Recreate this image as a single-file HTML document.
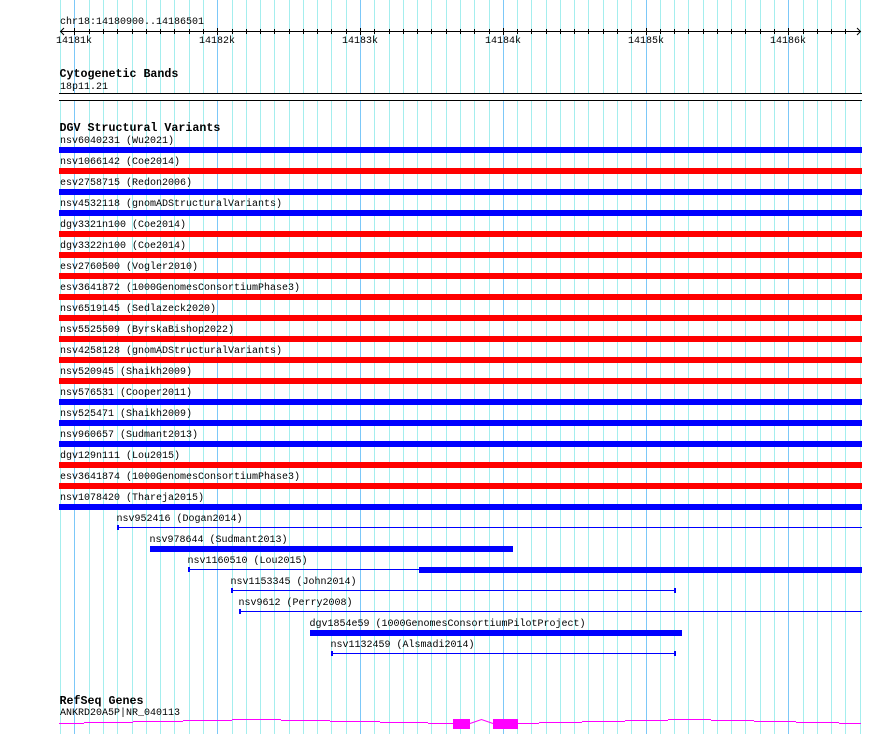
<!DOCTYPE html>
<html><head><meta charset="utf-8"><title>Genome tracks</title>
<style>
html,body{margin:0;padding:0;background:#fff;width:890px;height:734px;overflow:hidden}
svg{display:block}
text{font-family:"Liberation Mono",monospace;font-size:10px;fill:#000;white-space:pre}
text.b{font-weight:bold;font-size:11.67px}
</style></head><body>
<svg width="890" height="734" viewBox="0 0 890 734" xmlns="http://www.w3.org/2000/svg">
<g shape-rendering="crispEdges">
<path stroke="#a4eeee" stroke-width="1" fill="none" d="M60.5 0V734M89.5 0V734M103.5 0V734M117.5 0V734M132.5 0V734M146.5 0V734M160.5 0V734M174.5 0V734M189.5 0V734M203.5 0V734M232.5 0V734M246.5 0V734M260.5 0V734M274.5 0V734M289.5 0V734M303.5 0V734M317.5 0V734M331.5 0V734M346.5 0V734M374.5 0V734M389.5 0V734M403.5 0V734M417.5 0V734M431.5 0V734M446.5 0V734M460.5 0V734M474.5 0V734M489.5 0V734M517.5 0V734M531.5 0V734M546.5 0V734M560.5 0V734M574.5 0V734M588.5 0V734M603.5 0V734M617.5 0V734M631.5 0V734M660.5 0V734M674.5 0V734M688.5 0V734M703.5 0V734M717.5 0V734M731.5 0V734M745.5 0V734M760.5 0V734M774.5 0V734M803.5 0V734M817.5 0V734M831.5 0V734M845.5 0V734M860.5 0V734"/>
<path stroke="#7cc8f8" stroke-width="1" fill="none" d="M74.5 0V734M217.5 0V734M360.5 0V734M503.5 0V734M646.5 0V734M788.5 0V734"/>
<rect x="59" y="94" width="803" height="6" fill="#fff"/>
<rect x="59" y="93" width="803" height="1" fill="#000"/>
<rect x="59" y="100" width="803" height="1" fill="#000"/>
<!-- axis -->
<rect x="60" y="31" width="801" height="1" fill="#000"/>
<path stroke="#000" stroke-width="1" fill="none" d="M89.5 29V34M103.5 29V34M117.5 29V34M132.5 29V34M146.5 29V34M160.5 29V34M174.5 29V34M189.5 29V34M203.5 29V34M232.5 29V34M246.5 29V34M260.5 29V34M274.5 29V34M289.5 29V34M303.5 29V34M317.5 29V34M331.5 29V34M346.5 29V34M374.5 29V34M389.5 29V34M403.5 29V34M417.5 29V34M431.5 29V34M446.5 29V34M460.5 29V34M474.5 29V34M489.5 29V34M517.5 29V34M531.5 29V34M546.5 29V34M560.5 29V34M574.5 29V34M588.5 29V34M603.5 29V34M617.5 29V34M631.5 29V34M660.5 29V34M674.5 29V34M688.5 29V34M703.5 29V34M717.5 29V34M731.5 29V34M745.5 29V34M760.5 29V34M774.5 29V34M803.5 29V34M817.5 29V34M831.5 29V34M845.5 29V34M74.5 28V35M217.5 28V35M360.5 28V35M503.5 28V35M646.5 28V35M788.5 28V35"/>
</g>
<path stroke="#000" stroke-width="1" fill="none" d="M64 28L60.5 31.5L64 35M857 28L860.5 31.5L857 35"/>
<text x="60" y="24">chr18:14180900..14186501</text>
<text x="56" y="43">14181k</text>
<text x="199" y="43">14182k</text>
<text x="342" y="43">14183k</text>
<text x="485" y="43">14184k</text>
<text x="628" y="43">14185k</text>
<text x="770" y="43">14186k</text>
<text class="b" x="59.5" y="77">Cytogenetic Bands</text>
<text x="60" y="89">18p11.21</text>
<text class="b" x="59.5" y="131">DGV Structural Variants</text>
<g shape-rendering="crispEdges">
<rect x="59" y="147" width="803" height="6" fill="#0000ff"/>
<rect x="59" y="168" width="803" height="6" fill="#ff0000"/>
<rect x="59" y="189" width="803" height="6" fill="#0000ff"/>
<rect x="59" y="210" width="803" height="6" fill="#0000ff"/>
<rect x="59" y="231" width="803" height="6" fill="#ff0000"/>
<rect x="59" y="252" width="803" height="6" fill="#ff0000"/>
<rect x="59" y="273" width="803" height="6" fill="#ff0000"/>
<rect x="59" y="294" width="803" height="6" fill="#ff0000"/>
<rect x="59" y="315" width="803" height="6" fill="#ff0000"/>
<rect x="59" y="336" width="803" height="6" fill="#ff0000"/>
<rect x="59" y="357" width="803" height="6" fill="#ff0000"/>
<rect x="59" y="378" width="803" height="6" fill="#ff0000"/>
<rect x="59" y="399" width="803" height="6" fill="#0000ff"/>
<rect x="59" y="420" width="803" height="6" fill="#0000ff"/>
<rect x="59" y="441" width="803" height="6" fill="#0000ff"/>
<rect x="59" y="462" width="803" height="6" fill="#ff0000"/>
<rect x="59" y="483" width="803" height="6" fill="#ff0000"/>
<rect x="59" y="504" width="803" height="6" fill="#0000ff"/>
<!-- partial -->
<g fill="#0000ff">
<rect x="117" y="527" width="745" height="1"/><rect x="117" y="525" width="2" height="5"/>
<rect x="150" y="546" width="363" height="6"/>
<rect x="188" y="569" width="231" height="1"/><rect x="188" y="567" width="2" height="5"/><rect x="419" y="567" width="443" height="6"/>
<rect x="231" y="590" width="445" height="1"/><rect x="231" y="588" width="2" height="5"/><rect x="674" y="588" width="2" height="5"/>
<rect x="239" y="611" width="623" height="1"/><rect x="239" y="609" width="2" height="5"/>
<rect x="310" y="630" width="372" height="6"/>
<rect x="331" y="653" width="345" height="1"/><rect x="331" y="651" width="2" height="5"/><rect x="674" y="651" width="2" height="5"/>
</g>
<!-- gene -->
<g fill="#ff00ff">
<rect x="59" y="723" width="25" height="1"/>
<rect x="84" y="722" width="49" height="1"/>
<rect x="133" y="721" width="50" height="1"/>
<rect x="183" y="720" width="49" height="1"/>
<rect x="232" y="719" width="49" height="1"/>
<rect x="281" y="720" width="49" height="1"/>
<rect x="330" y="721" width="50" height="1"/>
<rect x="380" y="722" width="48" height="1"/>
<rect x="428" y="723" width="25" height="1"/>
<rect x="453" y="719" width="17" height="10"/>
<rect x="493" y="719" width="25" height="10"/>
<rect x="518" y="723" width="21" height="1"/>
<rect x="539" y="722" width="43" height="1"/>
<rect x="582" y="721" width="43" height="1"/>
<rect x="625" y="720" width="43" height="1"/>
<rect x="668" y="719" width="43" height="1"/>
<rect x="711" y="720" width="43" height="1"/>
<rect x="754" y="721" width="42" height="1"/>
<rect x="796" y="722" width="43" height="1"/>
<rect x="839" y="723" width="22" height="1"/>
</g>
</g>
<path d="M470 723.5L481.5 719.5L493 723.5" stroke="#ff00ff" stroke-width="1" fill="none"/>
<text x="60" y="143">nsv6040231 (Wu2021)</text>
<text x="60" y="164">nsv1066142 (Coe2014)</text>
<text x="60" y="185">esv2758715 (Redon2006)</text>
<text x="60" y="206">nsv4532118 (gnomADStructuralVariants)</text>
<text x="60" y="227">dgv3321n100 (Coe2014)</text>
<text x="60" y="248">dgv3322n100 (Coe2014)</text>
<text x="60" y="269">esv2760500 (Vogler2010)</text>
<text x="60" y="290">esv3641872 (1000GenomesConsortiumPhase3)</text>
<text x="60" y="311">nsv6519145 (Sedlazeck2020)</text>
<text x="60" y="332">nsv5525509 (ByrskaBishop2022)</text>
<text x="60" y="353">nsv4258128 (gnomADStructuralVariants)</text>
<text x="60" y="374">nsv520945 (Shaikh2009)</text>
<text x="60" y="395">nsv576531 (Cooper2011)</text>
<text x="60" y="416">nsv525471 (Shaikh2009)</text>
<text x="60" y="437">nsv960657 (Sudmant2013)</text>
<text x="60" y="458">dgv129n111 (Lou2015)</text>
<text x="60" y="479">esv3641874 (1000GenomesConsortiumPhase3)</text>
<text x="60" y="500">nsv1078420 (Thareja2015)</text>
<text x="116.5" y="521">nsv952416 (Dogan2014)</text>
<text x="149.5" y="542">nsv978644 (Sudmant2013)</text>
<text x="187.5" y="563">nsv1160510 (Lou2015)</text>
<text x="230.5" y="584">nsv1153345 (John2014)</text>
<text x="238.5" y="605">nsv9612 (Perry2008)</text>
<text x="309.5" y="626">dgv1854e59 (1000GenomesConsortiumPilotProject)</text>
<text x="330.5" y="647">nsv1132459 (Alsmadi2014)</text>
<text class="b" x="59.5" y="704">RefSeq Genes</text>
<text x="60" y="715">ANKRD20A5P|NR_040113</text>
</svg>
</body></html>
